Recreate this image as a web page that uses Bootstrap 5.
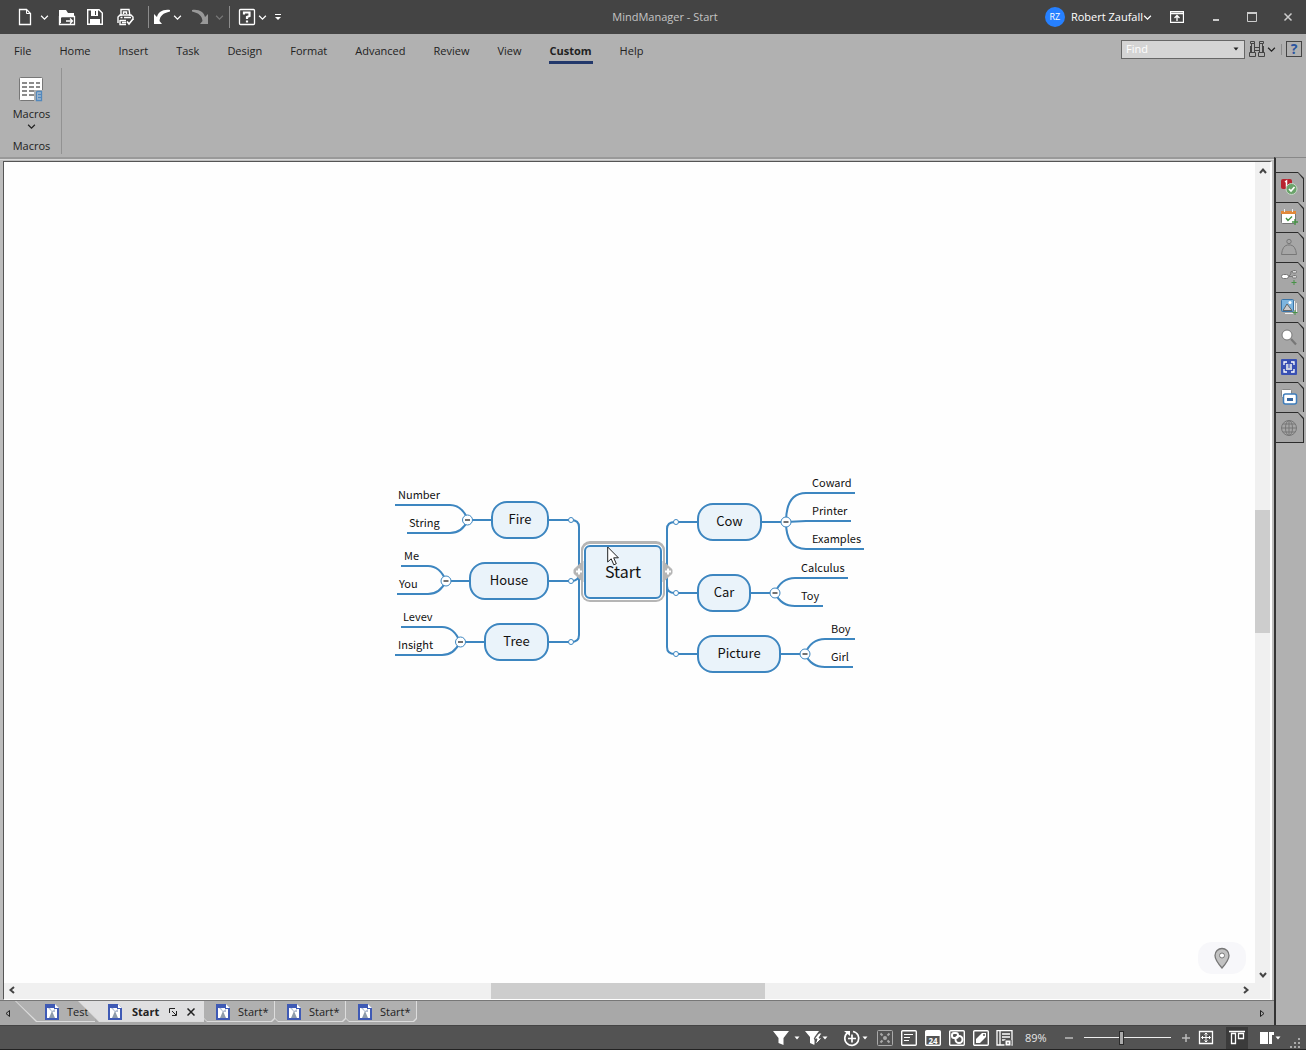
<!DOCTYPE html>
<html lang="en">
<head>
<meta charset="utf-8">
<meta name="viewport" content="width=device-width, initial-scale=1">
<title>MindManager - Start</title>
<link rel="stylesheet" href="https://cdn.jsdelivr.net/npm/bootstrap@5.3.0/dist/css/bootstrap.min.css">
<style>
  body { font: 11px/16px "Open Sans", "Noto Sans", sans-serif; color: #222; background: #b1b1b1; height: 100vh; overflow: hidden; }
  button { font: inherit; color: inherit; background: none; border: 0; padding: 0; display: flex; align-items: center; justify-content: center; flex: none; }
  svg { display: block; flex: none; fill: none; stroke: currentColor; }
  .fillc { fill: currentColor; stroke: none; }

  /* title bar */
  .titlebar { height: 34px; background: #444; color: #fff; position: relative; }
  .app-name { color: #c4c4c4; }
  .tool { width: 18px; height: 20px; }
  .drop { width: 12px; height: 20px; }
  .vline { width: 1px; height: 22px; background: #8c8c8c; }
  .vline.short { height: 11px; }
  .avatar { width: 20px; height: 20px; margin-right: 6px; border-radius: 50%; background: #2680ff; font-size: 9px; }
  .winbtn { width: 36px; height: 34px; color: #ccc; }

  /* ribbon */
  .ribbon-tabs { height: 34px; }
  .ribbon-tabs a { padding: 9px 0 0; margin: 0 14px; color: #222; text-decoration: none; display: block; height: 30px; }
  .ribbon-tabs a.current { font-weight: 700; border-bottom: 3px solid #22386b; padding-left: 1px; padding-right: 1px; margin: 0 13px; }
  .findbox { width: 124px; height: 19px; border: 1px solid #666; background: #d4d4d4; }
  .findbox input { border: 0; background: none; outline: 0; width: 100px; padding: 0 4px; font: inherit; color: #222; }
  .findbox input::placeholder { color: #fff; opacity: 1; }
  .helpbtn { width: 16px; height: 16px; border: 1px solid #444; color: #2b55a0; font-size: 14px; font-weight: 700; }
  .ribbon-body { height: 89px; }
  .ribbon-group { width: 62px; height: 86px; border-right: 1px solid #929292; padding-left: 2px; }
  .macro-btn { flex-direction: column; justify-content: flex-start; margin: 8px 0 6px; height: 56px; }

  /* document area */
  .docframe { border-top: 2px solid #999; box-shadow: inset 0 1px #d8d8d8; padding: 2px 2px 0 3px; background: #bdbdbd; }
  .docinner { border-left: 1px solid #555; border-top: 1px solid #555; border-bottom: 1px solid #fff; border-right: 2px solid #fff; background: #fefefe; }
  .board { width: 499px; height: 211px; position: relative; flex: none; }
  .scroll-v { width: 15px; background: #f0f0f0; }
  .scroll-h { height: 16px; background: #f0f0f0; }
  .arrow { width: 15px; height: 17px; color: #444; }
  .scroll-h .arrow { width: 16px; height: 14px; }
  .rail { position: relative; }
  .thumb-v { position: absolute; left: 0; width: 100%; top: 42.1%; height: 15.6%; background: #cdcdcd; }
  .thumb-h { position: absolute; top: 0; height: 100%; left: 38.7%; width: 22.5%; background: #cdcdcd; }
  .locator { position: absolute; right: 9px; bottom: 9px; width: 48px; height: 32px; border-radius: 14px; background: #f7f7fa; color: #777; }

  /* mind map */
  .topic, .leaf { position: absolute; font-family: "Noto Sans CJK SC", sans-serif; color: #111; white-space: nowrap; text-align: center; }
  .topic { height: 38px; border: 2px solid #3d86c0; border-radius: 16px; background: #eaf3fa; font-size: 13px; line-height: 32px; }
  .topic.central { height: 54px; border-radius: 6px; font-size: 16px; line-height: 48px; box-shadow: 0 0 0 1px #fff, 0 0 0 3px #b5b5b5, 0 -1px 0 3px #b5b5b5; }
  .leaf { font-size: 11px; line-height: 18px; }
  .wires { position: absolute; inset: 0; stroke: #3d86c0; stroke-width: 2; }
  .handles { position: absolute; inset: 0; }
  .pointer { position: absolute; left: 227px; top: 79px; }

  /* document tabs */
  .doctabs { height: 25px; background: #a8a8a8; border-top: 1px solid #777; }
  .doctab { position: relative; height: 21px; padding: 0 7px 0 12px; color: #222; width: 71px; white-space: nowrap; justify-content: flex-start; gap: 8px; isolation: isolate; }
  .doctab::before, .doctab::after { content: ""; position: absolute; inset: 0; z-index: -2; background: #dcdcdc; clip-path: polygon(0 0,100% 0,100% calc(100% - 3px),calc(100% - 3px) 100%,3px 100%,0 calc(100% - 3px)); }
  .doctab::after { inset: 0 1px 1px 0; z-index: -1; background: #b0b0b0; }
  .doctab.slant { width: 80px; padding-left: 30px; }
  .doctab.slant::before, .doctab.slant::after { clip-path: polygon(0 0,100% 0,100% 100%,21px 100%); }
  .doctab.slant::after { inset: 0 0 1px 1px; }
  .doctab.open { width: 126px; margin-left: -17px; font-weight: 700; gap: 10px; z-index: 1; }
  .doctab.open::after { background: #dfdfe0; }

  /* side dock */
  .dock { width: 32px; border-left: 2px solid #333; border-top: 1px solid #888; background: #b1b1b1; padding-top: 14px; }
  .docktab { position: relative; width: 28px; height: 30px; padding-right: 2px; isolation: isolate; }
  .docktab::before, .docktab::after { content: ""; position: absolute; inset: 0; z-index: -2; background: #2c2c2c; clip-path: polygon(0 0,22px 0,100% 6px,100% 100%,0 100%); }
  .docktab::after { inset: 1px 1px 0 0; z-index: -1; background: #a6a6a6; }
  .docktab:last-child { height: 31px; }
  .docktab:last-child::after { bottom: 1px; }

  /* status bar */
  .statusbar { height: 25px; background: #535353; border-top: 1px solid #444; border-bottom: 1px solid #222; color: #fff; }
  .stat { width: 16px; height: 18px; margin-right: 8px; }
  .mini { width: 8px; height: 18px; }
  .zoomrange { appearance: none; width: 87px; height: 16px; margin: 0 11px; background: linear-gradient(#eee,#eee) center/100% 1px no-repeat; }
  .zoomrange::-webkit-slider-thumb { appearance: none; width: 5px; height: 14px; background: #aaa; border: 1px solid #2b2b2b; }
  .viewbtn { width: 22px; height: 22px; background: #3b3b3b; }
  .zoomtext { width: 44px; color: #e6e6e6; }
</style>
<script src="https://cdn.jsdelivr.net/npm/bootstrap@5.3.0/dist/js/bootstrap.bundle.min.js"></script>
</head>
<body class="d-flex flex-column">

<svg width="0" height="0" class="position-absolute">
  <symbol id="chev" viewBox="0 0 8 8"><path d="M1 2.500 4 5.500l3-3" stroke-width="1.100"/></symbol>
  <symbol id="tri" viewBox="0 0 8 8"><path d="M1.500 2.500h5L4 5.500z" fill="currentColor" stroke="none"/></symbol>
  <symbol id="doc" viewBox="0 0 14 16"><path d="M0 0h10l4 4v12H0z" fill="#3f5ab5" stroke="none"/><path d="M10 0v4h4z" fill="#fff" stroke="none"/><path d="M2 4H9v1h3v9H2z" fill="#fff" stroke="none"/><path d="M3 4h2l2 3 3-2v3l-3 0z" fill="#b5c0d4" stroke="none"/><path d="M7 7 10 14H4z" fill="#8f9cab" stroke="none"/></symbol>
</svg>

<header class="titlebar d-flex align-items-center flex-shrink-0">
  <div class="ps-3 d-flex align-items-center">
    <button class="tool" aria-label="New"><svg width="16" height="18"><path d="M2.500 1.500h7l4 4v11h-11z" stroke-width="1.300"/><path d="M9.500 1.500v4h4"/></svg></button>
    <button class="drop me-2 ms-1" aria-label="New options"><svg width="9" height="9"><use href="#chev"/></svg></button>
    <button class="tool" aria-label="Open"><svg width="18" height="18"><path d="M1 15V2h7l2 3h6v3H5L3 10v5z" class="fillc"/><path d="M1.500 8v8.500h15V8.500H4M8 13h6M12 10.500l2.500 2.500L12 15.500" stroke-width="1.300"/></svg></button>
    <button class="tool ms-2 me-1 ps-1" aria-label="Save"><svg width="18" height="18"><path d="M1.700 1.700h11.300l3.300 3.300v11.300H1.700z" stroke-width="1.400"/><path d="M5 2h7v6H5zM4 11h10v5H4z" class="fillc"/><path d="M9.500 3v4" stroke="#444"/></svg></button>
    <button class="tool ms-2 ps-1" aria-label="Print"><svg width="18" height="18"><path d="M5 8V1.500h8L14 8M7.500 6V4h3v2M2 15V9l2-2h11l2 2v3M4 12v4.500h6M4 12.500h6M6 14.500h4" stroke-width="1.400"/><path d="M4.500 9.500h2M8 9.500h7M11 13.500l2 2.500 4-5" stroke-width="1.700"/></svg></button>
    <span class="vline ms-3 me-1"></span>
    <button class="tool" aria-label="Undo"><svg width="18" height="18"><path d="M1 6v10h8L6.500 13C7 8 10 5 17 3.500V2C10 1 5 4 4 9z" class="fillc"/></svg></button>
    <button class="drop" aria-label="Undo options"><svg width="9" height="9"><use href="#chev"/></svg></button>
    <button class="tool ms-2" aria-label="Redo"><svg width="18" height="18" color="#999"><path d="M17 6v10H9l2.500-3C11 8 8 5 1 3.500V2c7-1 12 2 13 7z" class="fillc"/></svg></button>
    <button class="drop ms-1" aria-label="Redo options"><svg width="9" height="9" color="#777"><use href="#chev"/></svg></button>
    <span class="vline mx-1"></span>
    <button class="tool ms-1" aria-label="Help"><svg width="18" height="18"><rect x="1.500" y="1.500" width="15" height="15" rx="1" stroke-width="1.300"/><path d="M6 6.500V4.500h5.500V8L9 9v2M9 12.500v2" stroke-width="2.200"/></svg></button>
    <button class="drop me-1" aria-label="Help options"><svg width="9" height="9"><use href="#chev"/></svg></button>
    <button class="drop" aria-label="Customize toolbar"><svg width="8" height="8"><path d="M1 1.500h6"/><path d="M1 4h6L4 7z" class="fillc"/></svg></button>
  </div>
  <div class="app-name position-absolute start-50 translate-middle-x ps-4">MindManager - Start</div>
  <div class="ms-auto d-flex align-items-center">
    <span class="avatar d-flex align-items-center justify-content-center">RZ</span>
    <button class="text-white me-3">Robert Zaufall<svg width="9" height="9"><use href="#chev"/></svg></button>
    <button class="tool me-2" aria-label="Ribbon display"><svg width="14" height="12"><path d="M.5.500h13v11H.5zM1 2.500h12M7 10V4.500M4.500 7 7 4.500 9.500 7" stroke-width="1.300"/></svg></button>
    <button class="winbtn ms-1" aria-label="Minimize"><svg width="8" height="8"><path d="M1 7h6" stroke-width="2"/></svg></button>
    <button class="winbtn" aria-label="Maximize"><svg width="10" height="10"><path d="M.5 1h9v8.500h-9z"/><path d="M0 1h10" stroke-width="2"/></svg></button>
    <button class="winbtn" aria-label="Close"><svg width="10" height="10"><path d="m1.500 1.500 7 7m0-7-7 7" stroke-width="1.500"/></svg></button>
  </div>
</header>

<nav class="ribbon-tabs d-flex flex-shrink-0">
  <a href="#">File</a><a href="#">Home</a><a href="#">Insert</a><a href="#">Task</a><a href="#">Design</a><a href="#">Format</a><a href="#">Advanced</a><a href="#">Review</a><a href="#">View</a><a href="#" class="current">Custom</a><a href="#">Help</a>
  <div class="ms-auto d-flex align-items-center pe-1 pb-1">
    <div class="findbox d-flex align-items-center"><input type="text" placeholder="Find" aria-label="Find"><button class="ms-auto me-1" aria-label="Find history"><svg width="8" height="8"><use href="#tri"/></svg></button></div>
    <button class="ms-1" aria-label="Search"><svg width="16" height="16" color="#444"><path d="M1.500.500h4v2h-4zM10.500.500h4v2h-4zM2.500 2.500h3v9h-3zM10.500 2.500h3v9h-3zM.5 11.500h6v4h-6zM9.500 11.500h6v4h-6zM5.500 6.500h5M5.500 9.500h5M1.500 5v6M14.500 5v6"/></svg></button>
    <button class="drop" aria-label="Search options"><svg width="9" height="9"><use href="#chev"/></svg></button>
    <span class="vline short ms-1 me-1"></span>
    <button class="helpbtn" aria-label="Help">?</button>
  </div>
</nav>
<section class="ribbon-body flex-shrink-0">
  <div class="ribbon-group d-flex flex-column align-items-center">
    <button class="macro-btn"><svg width="26" height="26"><rect x="1.500" y="1.500" width="23" height="23" rx="1" fill="#fff" stroke="#777"/><path d="M4 7h18M4 11h18M4 15h18M4 19h12" stroke="#666" stroke-width="1.500" stroke-dasharray="5 2"/><path d="M16 14h10v12H16z" fill="#b1b1b1" stroke="none"/><path d="M18.500 16.500q0-1 1-1h4v9h-5zM20 18.500h3M20 21.500h3" stroke="#5288bd" stroke-width="1.300" fill="#a9bdd0"/></svg><span class="mt-1">Macros</span><svg width="9" height="9"><use href="#chev"/></svg></button>
    <span>Macros</span>
  </div>
</section>

<main class="d-flex flex-grow-1" style="min-height:0">
  <div class="d-flex flex-column flex-grow-1">
    <div class="docframe flex-grow-1 d-flex">
      <div class="docinner flex-grow-1 d-flex flex-column">
        <div class="d-flex flex-grow-1">
          <div class="flex-grow-1 position-relative d-flex align-items-center justify-content-center">
            <div class="board">
              <svg class="wires" width="499" height="211">
                <g id="connectors">
                  <path d="M169 53h22q8 0 8 7v108q0 7-8 7h-22M169 114h22q8 0 8-7"/>
                  <path d="M318 55h-23q-8 0-8 7v118q0 7 8 7h23M318 126h-23q-8 0-8-7"/>
                  <path d="M112 53H88q-6-15-18-15H15M88 53q-6 13-18 13H27"/>
                  <path d="M91 114H66q-6-15-18-15H21M66 114q-6 13-18 13H17"/>
                  <path d="M105 175H80q-6-15-18-15H21M80 175q-6 13-18 13H15"/>
                  <path d="M382 55h24q0-29 20-29h49M406 55l20-1h45M406 55q0 27 20 27h58"/>
                  <path d="M371 126h24q6-15 20-15h53M395 126q6 13 20 13h28"/>
                  <path d="M401 187h24q6-15 20-15h30M425 187q6 13 20 13h28"/>
                </g>
                <g fill="#fff" stroke-width="1">
                  <circle cx="191" cy="53" r="2.500"/><circle cx="191" cy="114" r="2.500"/><circle cx="191" cy="175" r="2.500"/>
                  <circle cx="296" cy="55" r="2.500"/><circle cx="296" cy="126" r="2.500"/><circle cx="296" cy="187" r="2.500"/>
                  <circle cx="87.500" cy="53" r="5"/><circle cx="66" cy="114" r="5"/><circle cx="80.500" cy="175" r="5"/>
                  <circle cx="406" cy="55" r="5"/><circle cx="395" cy="126" r="5"/><circle cx="425" cy="187" r="5"/>
                </g>
                <path d="M85 53h5M63.500 114h5M78 175h5M403.500 55h5M392.500 126h5M422.500 187h5" stroke="#444" stroke-width="1.500"/>
              </svg>
              <!-- main topics -->
              <div class="topic central" style="left:204px;top:78px;width:78px">Start</div>
              <div class="topic" style="left:111px;top:34px;width:58px">Fire</div>
              <div class="topic" style="left:89px;top:95px;width:80px">House</div>
              <div class="topic" style="left:104px;top:156px;width:65px">Tree</div>
              <div class="topic" style="left:317px;top:36px;width:65px">Cow</div>
              <div class="topic" style="left:317px;top:107px;width:54px">Car</div>
              <div class="topic" style="left:317px;top:168px;width:84px">Picture</div>
              <!-- subtopics -->
              <div class="leaf" style="left:18px;top:18px">Number</div>
              <div class="leaf" style="left:29px;top:46px">String</div>
              <div class="leaf" style="left:24px;top:79px">Me</div>
              <div class="leaf" style="left:19px;top:107px">You</div>
              <div class="leaf" style="left:23px;top:140px">Levev</div>
              <div class="leaf" style="left:18px;top:168px">Insight</div>
              <div class="leaf" style="left:432px;top:6px">Coward</div>
              <div class="leaf" style="left:432px;top:34px">Printer</div>
              <div class="leaf" style="left:432px;top:62px">Examples</div>
              <div class="leaf" style="left:421px;top:91px">Calculus</div>
              <div class="leaf" style="left:421px;top:119px">Toy</div>
              <div class="leaf" style="left:451px;top:152px">Boy</div>
              <div class="leaf" style="left:451px;top:180px">Girl</div>
              <svg class="handles" width="499" height="211"><path d="m203 94-9 8.500v4l9 8.500zM283 94l9 8.500v4l-9 8.500z" fill="#b5b5b5" stroke="#b5b5b5"/><path d="M196 104.500h6M199 101.500v6M285 104.500h6M288 101.500v6" stroke="#fff" stroke-width="2"/></svg>
              <svg class="pointer" width="13" height="20"><path d="M.7 1v15l3.500-3.200 2.600 6 2.500-1.100-2.600-5.900h4.700z" fill="#fff" stroke="#222"/></svg>
            </div>
            <button class="locator" aria-label="Locate"><svg width="18" height="22"><path d="M9 21Q2 13 2 8.500a7 7 0 0 1 14 0Q16 13 9 21z" fill="#c2c2c2" stroke-width="1.300"/><circle cx="9" cy="8.500" r="2.500" fill="#fff"/></svg></button>
          </div>
          <div class="scroll-v d-flex flex-column">
            <button class="arrow" aria-label="Scroll up"><svg width="8" height="8"><path d="m1 6 3-3.500L7 6" stroke-width="2"/></svg></button>
            <div class="rail flex-grow-1"><div class="thumb-v"></div></div>
            <button class="arrow" aria-label="Scroll down"><svg width="8" height="8"><path d="m1 2 3 3.500L7 2" stroke-width="2"/></svg></button>
          </div>
        </div>
        <div class="scroll-h d-flex pe-3">
          <button class="arrow" aria-label="Scroll left"><svg width="8" height="8"><path d="M6 1 2.500 4 6 7" stroke-width="2"/></svg></button>
          <div class="rail flex-grow-1"><div class="thumb-h"></div></div>
          <button class="arrow" aria-label="Scroll right"><svg width="8" height="8"><path d="m2 1 3.500 3L2 7" stroke-width="2"/></svg></button>
        </div>
      </div>
    </div>
    <div class="doctabs d-flex flex-shrink-0">
      <button class="px-1" aria-label="Previous tabs"><svg width="7" height="9"><path d="M5.500 1.500v6L2 4.500z"/></svg></button>
      <button class="doctab slant"><svg width="14" height="16"><use href="#doc"/></svg>Test</button>
      <button class="doctab slant open"><svg width="14" height="16"><use href="#doc"/></svg>Start<svg width="8" height="8"><path d="M.5 5V.500H6M3 3l4 4M7.500 3v4.500H3"/></svg><svg width="8" height="8"><path d="m.5.500 7 7m0-7-7 7" stroke-width="1.500"/></svg></button>
      <button class="doctab"><svg width="14" height="16"><use href="#doc"/></svg>Start*</button>
      <button class="doctab"><svg width="14" height="16"><use href="#doc"/></svg>Start*</button>
      <button class="doctab"><svg width="14" height="16"><use href="#doc"/></svg>Start*</button>
      <button class="ms-auto me-2" aria-label="Next tabs"><svg width="7" height="9"><path d="M1.500 1.500v6L5 4.500z"/></svg></button>
    </div>
  </div>
  <aside class="dock flex-shrink-0">
    <button class="docktab" aria-label="Task roll-up"><svg width="18" height="18"><rect x="1" y="1" width="11" height="10" rx="2" fill="#b8242f" stroke="none"/><path d="M5 4l1.500-1v6" stroke="#fff" stroke-width="1.500"/><circle cx="11.500" cy="11" r="5.500" fill="#6aa36a" stroke="#c9d8c9"/><path d="m9 11 2 2 3.500-4" stroke="#fff" stroke-width="1.700"/></svg></button>
    <button class="docktab" aria-label="Calendar"><svg width="18" height="18"><rect x="1.500" y="3.500" width="14" height="12" rx="1" fill="#fff" stroke="#777"/><path d="M1 3h15v3H1z" fill="#e1893a" stroke="none"/><path d="M4.500 1v3M12.500 1v3" stroke="#eee"/><path d="m6 10 2 2.500 4-4M15 11v6M12 14h6" stroke="#479247" stroke-width="1.400"/></svg></button>
    <button class="docktab" aria-label="Resources"><svg width="18" height="18" color="#777"><circle cx="9" cy="3.500" r="2.200"/><path d="M1.500 16.500q1-9 6-9.500h3q5 .5 6 9.500z"/></svg></button>
    <button class="docktab" aria-label="Map parts"><svg width="18" height="18" color="#777"><path d="M7 8.500q4 0 4-5h2M7 8.500h6"/><rect x="1.500" y="6.500" width="7" height="4" rx="2" fill="#fff"/><rect x="12.500" y="2.500" width="4" height="2.500" rx="1" fill="#ddd"/><rect x="12.500" y="7.500" width="4" height="2.500" rx="1" fill="#ddd"/><path d="M14 12v5M11.500 14.500h5" stroke="#479247"/></svg></button>
    <button class="docktab" aria-label="Library"><svg width="18" height="18"><rect x="1.500" y="1.500" width="12" height="12" rx="1" fill="#7db5df" stroke="#3974a8"/><circle cx="10" cy="4.500" r="1.500" fill="#fff" stroke="none"/><path d="M3 12.500 7 6l5 6.500z" fill="#ccc" stroke="#666"/><path d="M14.500 3v10.500M16.500 5v9M5 15.500h8" stroke="#eee"/><path d="M15 12v5M12.500 14.500h5" stroke="#479247"/></svg></button>
    <button class="docktab" aria-label="Search"><svg width="18" height="18" color="#777"><circle cx="7" cy="7" r="5" fill="#fff"/><path d="m11 11 5 5.500" stroke-width="2.200"/></svg></button>
    <button class="docktab" aria-label="Snap"><svg width="18" height="18"><rect x="1" y="1" width="16" height="16" rx="1" fill="#3850b3" stroke="none"/><path d="M4 7V4h3M11 4h3v3M14 11v3h-3M7 14H4v-3" stroke="#fff" stroke-width="1.300"/><path d="M6 6h6v6H6z" fill="#c8cfe3" stroke="none"/><path d="M9 6v4" stroke="#3850b3"/></svg></button>
    <button class="docktab" aria-label="Windows"><svg width="18" height="18"><rect x="1.500" y="1.500" width="10" height="8" rx="1" fill="#fff" stroke="#888"/><rect x="3.500" y="6" width="13" height="10" rx="2" fill="#fff" stroke="#3e7cba" stroke-width="1.500"/><path d="M7 10h6v3H7z" fill="#3767a0" stroke="none"/></svg></button>
    <button class="docktab" aria-label="Browser"><svg width="18" height="18" color="#777"><circle cx="9" cy="9" r="7.500"/><ellipse cx="9" cy="9" rx="3.500" ry="7.500"/><path d="M9 1.500v15M1.500 9h15M3 5h12M3 13h12"/></svg></button>
  </aside>
</main>

<footer class="statusbar d-flex align-items-center justify-content-end flex-shrink-0">
  <button class="me-1" aria-label="Filter"><svg width="16" height="16"><path d="M0 1h16l-5.500 7v7l-5-2V8z" class="fillc"/></svg></button>
  <button class="mini me-1" aria-label="Filter options"><svg width="8" height="8"><use href="#tri"/></svg></button>
  <button aria-label="Power filter"><svg width="18" height="16"><path d="M0 1h14L9.500 7v8L5 13V7z" class="fillc"/><path d="m14 3-5 6h3l-2 6 7-7h-3l3-5z" fill="#fff" stroke="#535353"/></svg></button>
  <button class="mini me-2 pe-1" aria-label="Power filter options"><svg width="8" height="8"><use href="#tri"/></svg></button>
  <button class="ms-1" aria-label="Add"><svg width="18" height="18"><path d="M5 3.500a7 7 0 1 0 5-1M9 5.500v8M5 9.500h8" stroke-width="1.700"/><path d="M1 2h6v5z" class="fillc"/></svg></button>
  <button class="mini me-1" aria-label="Add options"><svg width="8" height="8"><use href="#tri"/></svg></button>
  <button class="stat ms-1" aria-label="Focus"><svg width="16" height="16" color="#aaa"><rect x=".5" y=".5" width="15" height="15" rx="1"/><circle cx="8" cy="8" r="2" class="fillc"/><path d="M3.500 3.500l2 2M12.500 3.500l-2 2M3.500 12.500l2-2M12.500 12.500l-2-2" stroke-width="2"/></svg></button>
  <button class="stat" aria-label="Notes"><svg width="16" height="16"><rect x=".7" y=".7" width="14.600" height="14.600" rx="1" stroke-width="1.400"/><path d="M3 4.500h9M3 7.500h6M3 10.500h5" stroke-width="1.200"/></svg></button>
  <button class="stat" aria-label="Calendar"><svg width="16" height="16"><rect x=".7" y=".7" width="14.600" height="14.600" rx="1" stroke-width="1.400"/><path d="M1 1h14v5H1z" class="fillc"/><text x="8" y="14" text-anchor="middle" font-size="8" font-weight="700" fill="#fff" stroke="none">24</text></svg></button>
  <button class="stat" aria-label="Links"><svg width="16" height="16"><rect x=".7" y=".7" width="14.600" height="14.600" rx="1" stroke-width="1.400"/><rect x="3" y="3" width="6" height="5" rx="2" stroke-width="2"/><circle cx="10" cy="9.500" r="3.500" stroke-width="2"/></svg></button>
  <button class="stat" aria-label="Tags"><svg width="16" height="16"><rect x=".7" y=".7" width="14.600" height="14.600" rx="1" stroke-width="1.400"/><path d="M3 9 9 3h4v4l-6 6H3z" class="fillc"/><circle cx="11" cy="5" r="1" fill="#535353" stroke="none"/></svg></button>
  <button class="stat" aria-label="Properties"><svg width="18" height="16"><path d="M1 .7h15V15H1zM4 1v14M6 4h8M6 7h8M6 10h4" stroke-width="1.300"/><path d="M9 10h6v6H9z" fill="#fff" stroke="#535353"/><path d="M11 13h2" stroke="#535353"/></svg></button>
  <span class="zoomtext ps-1">89%</span>
  <button aria-label="Zoom out"><svg width="8" height="8" color="#bbb"><path d="M0 4h8" stroke-width="1.500"/></svg></button>
  <input class="zoomrange" type="range" min="0" max="100" value="43" aria-label="Zoom">
  <button class="me-2" aria-label="Zoom in"><svg width="8" height="8" color="#bbb"><path d="M0 4h8M4 0v8" stroke-width="1.500"/></svg></button>
  <button class="me-1" aria-label="Fit map"><svg width="16" height="16"><path d="M1.500 1.500h13v12h-13z" stroke-width="1.300"/><path d="M8 3v9M3.500 7.500h9M6.500 4.500 8 3l1.500 1.500M6.500 10.500 8 12l1.500-1.500M5 6 3.500 7.500 5 9M11 6l1.500 1.500L11 9"/></svg></button>
  <button class="viewbtn ms-2 me-1" aria-label="View"><svg width="16" height="16"><path d="M0 1.500h16M2.500 3.500h4v10h-4zM9.500 3.500h5v5h-5z" stroke-width="1.300"/></svg></button>
  <button class="ms-2" aria-label="Panels"><svg width="14" height="14"><path d="M0 1h8v12H0zM9 1h5v3h-2v9H9z" class="fillc"/></svg></button>
  <button class="mini" aria-label="Panel options"><svg width="8" height="8"><use href="#tri"/></svg></button>
  <svg width="12" height="12" class="ms-2 me-1 align-self-end" color="#aaa"><path d="M8 2h2M8 6h2M4 6h2M0 10h2M4 10h2M8 10h2" stroke-width="2"/></svg>
</footer>
</body>
</html>
